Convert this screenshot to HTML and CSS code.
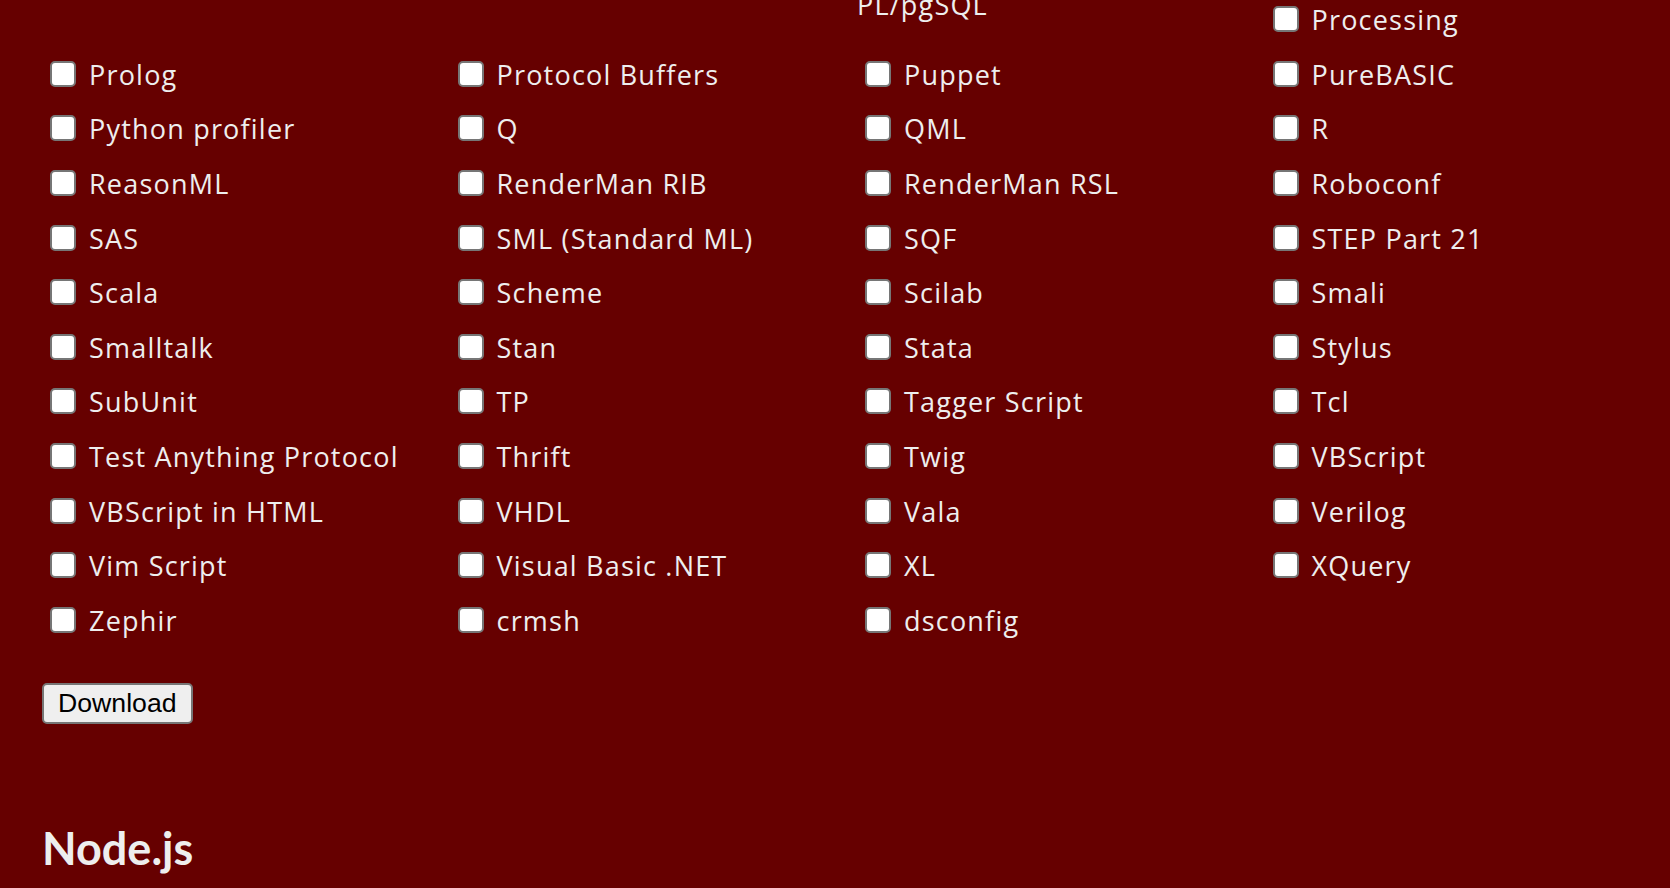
FILE: index.html
```html
<!DOCTYPE html>
<html lang="en">
<head>
<meta charset="utf-8">
<title>Download</title>
<link rel="stylesheet" href="styles.css">
</head>
<body>
<main class="page">
  <form class="download-form">
    <ul class="lang-list">
      <li class="lang lang-wrapped"><label><input type="checkbox" class="check">PostgreSQL and<br>PL/pgSQL</label></li>
      <li class="lang"><label><input type="checkbox" class="check">Processing</label></li>
      <li class="lang"><label><input type="checkbox" class="check">Prolog</label></li>
      <li class="lang"><label><input type="checkbox" class="check">Protocol Buffers</label></li>
      <li class="lang"><label><input type="checkbox" class="check">Puppet</label></li>
      <li class="lang"><label><input type="checkbox" class="check">PureBASIC</label></li>
      <li class="lang"><label><input type="checkbox" class="check">Python profiler</label></li>
      <li class="lang"><label><input type="checkbox" class="check">Q</label></li>
      <li class="lang"><label><input type="checkbox" class="check">QML</label></li>
      <li class="lang"><label><input type="checkbox" class="check">R</label></li>
      <li class="lang"><label><input type="checkbox" class="check">ReasonML</label></li>
      <li class="lang"><label><input type="checkbox" class="check">RenderMan RIB</label></li>
      <li class="lang"><label><input type="checkbox" class="check">RenderMan RSL</label></li>
      <li class="lang"><label><input type="checkbox" class="check">Roboconf</label></li>
      <li class="lang"><label><input type="checkbox" class="check">SAS</label></li>
      <li class="lang"><label><input type="checkbox" class="check">SML (Standard ML)</label></li>
      <li class="lang"><label><input type="checkbox" class="check">SQF</label></li>
      <li class="lang"><label><input type="checkbox" class="check">STEP Part 21</label></li>
      <li class="lang"><label><input type="checkbox" class="check">Scala</label></li>
      <li class="lang"><label><input type="checkbox" class="check">Scheme</label></li>
      <li class="lang"><label><input type="checkbox" class="check">Scilab</label></li>
      <li class="lang"><label><input type="checkbox" class="check">Smali</label></li>
      <li class="lang"><label><input type="checkbox" class="check">Smalltalk</label></li>
      <li class="lang"><label><input type="checkbox" class="check">Stan</label></li>
      <li class="lang"><label><input type="checkbox" class="check">Stata</label></li>
      <li class="lang"><label><input type="checkbox" class="check">Stylus</label></li>
      <li class="lang"><label><input type="checkbox" class="check">SubUnit</label></li>
      <li class="lang"><label><input type="checkbox" class="check">TP</label></li>
      <li class="lang"><label><input type="checkbox" class="check">Tagger Script</label></li>
      <li class="lang"><label><input type="checkbox" class="check">Tcl</label></li>
      <li class="lang"><label><input type="checkbox" class="check">Test Anything Protocol</label></li>
      <li class="lang"><label><input type="checkbox" class="check">Thrift</label></li>
      <li class="lang"><label><input type="checkbox" class="check">Twig</label></li>
      <li class="lang"><label><input type="checkbox" class="check">VBScript</label></li>
      <li class="lang"><label><input type="checkbox" class="check">VBScript in HTML</label></li>
      <li class="lang"><label><input type="checkbox" class="check">VHDL</label></li>
      <li class="lang"><label><input type="checkbox" class="check">Vala</label></li>
      <li class="lang"><label><input type="checkbox" class="check">Verilog</label></li>
      <li class="lang"><label><input type="checkbox" class="check">Vim Script</label></li>
      <li class="lang"><label><input type="checkbox" class="check">Visual Basic .NET</label></li>
      <li class="lang"><label><input type="checkbox" class="check">XL</label></li>
      <li class="lang"><label><input type="checkbox" class="check">XQuery</label></li>
      <li class="lang"><label><input type="checkbox" class="check">Zephir</label></li>
      <li class="lang"><label><input type="checkbox" class="check">crmsh</label></li>
      <li class="lang"><label><input type="checkbox" class="check">dsconfig</label></li>
    </ul>
    <button type="button" class="download-btn">Download</button>
  </form>
  <h2 class="section-title">Node.js</h2>
</main>
</body>
</html>
```

FILE: styles.css
```css
* {
  box-sizing: border-box;
}

html,
body {
  margin: 0;
  background: #660000;
}

body {
  font-family: "Open Sans", Lato, sans-serif;
  color: #eeeeee;
  overflow: hidden;
}

.page {
  padding-left: 42px;
}

.download-form {
  margin: 0;
}

.lang-list {
  list-style: none;
  margin: 0;
  padding: 0;
  display: grid;
  grid-template-columns: repeat(3, 407.5px) minmax(0, 1fr);
  grid-auto-rows: 54.63px;
}

.lang {
  font-size: 27px;
  line-height: 40px;
  letter-spacing: 1.2px;
}

/* long label that wrapped in the row above; only its last line shows */
.lang-wrapped {
  grid-column: 3;
  margin-top: -54.63px;
}

.check {
  -webkit-appearance: none;
  appearance: none;
  width: 26px;
  height: 26px;
  margin: 6px 13px 0 8px;
  vertical-align: top;
  border: 2px solid #767676;
  border-radius: 5px;
  background: #ffffff;
}

.download-btn {
  display: block;
  margin-top: 27px;
  height: 41px;
  padding: 0 14px;
  font-family: "Liberation Sans", Arial, sans-serif;
  font-size: 26.67px;
  color: #000000;
  background: #efefef;
  border: 2px solid #767676;
  border-radius: 5px;
}

.section-title {
  margin: 97px 0 0;
  font-family: Lato, "Open Sans", sans-serif;
  font-size: 45px;
  font-weight: 700;
  line-height: 1.2;
  color: #eeeeee;
}
```
